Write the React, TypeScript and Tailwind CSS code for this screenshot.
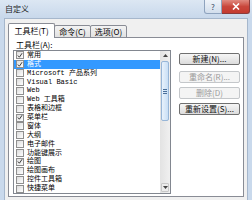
import React from 'react';

const items: { t: string; c?: boolean; s?: boolean }[] = [
  { t: '常用', c: true },
  { t: '格式', c: true, s: true },
  { t: 'Microsoft 产品系列' },
  { t: 'Visual Basic' },
  { t: 'Web' },
  { t: 'Web 工具箱' },
  { t: '表格和边框' },
  { t: '菜单栏', c: true },
  { t: '窗体' },
  { t: '大纲' },
  { t: '电子邮件' },
  { t: '功能键展示' },
  { t: '绘图', c: true },
  { t: '绘图画布' },
  { t: '控件工具箱' },
  { t: '快捷菜单' },
];

function Check({ on }: { on?: boolean }) {
  return (
    <div className="w-[8px] h-[8px] border border-[#8f8f8f] bg-gradient-to-br from-[#dcdcdc] to-[#ffffff] shrink-0 flex items-center justify-center">
      {on && (
        <svg width="7" height="7" viewBox="0 0 7 7">
          <path d="M1 3.5 L2.8 5.5 L6 0.8" fill="none" stroke="#333" strokeWidth="1.1" />
        </svg>
      )}
    </div>
  );
}

function Btn({ label, disabled }: { label: string; disabled?: boolean }) {
  return (
    <div
      className={
        'h-[12px] w-[61px] rounded-[2px] border flex items-center justify-center text-[8px] leading-none ' +
        (disabled
          ? 'border-[#c4c7ca] bg-[#f4f4f4] text-[#9a9a9a]'
          : 'border-[#707070] bg-gradient-to-b from-[#f6f6f6] to-[#dcdcdc] text-[#111]')
      }
    >
      {label}
    </div>
  );
}

export default function App() {
  return (
    <div className="w-[252px] h-[200px] bg-[#c9d9ec] overflow-hidden flex flex-col font-['Noto_Sans_CJK_SC',sans-serif] text-black">
      <div className="h-[18px] shrink-0 flex bg-gradient-to-b from-[#dce7f3] to-[#c8d8eb]">
        <div className="pl-[5px] pt-[4px] text-[8px] leading-[10px] text-[#1e1e1e]">自定义</div>
        <div className="ml-auto flex self-start mr-[2px]">
          <div className="w-[18px] h-[14px] border border-[#8ea3be] border-t-0 rounded-bl-[3px] bg-gradient-to-b from-[#eef3f9] to-[#d2deec] flex items-center justify-center text-[8px] leading-none text-[#33475f]">
            ?
          </div>
          <div className="w-[28px] h-[14px] border border-[#8a3b3b] border-t-0 border-l-0 rounded-br-[3px] bg-gradient-to-b from-[#e08a80] via-[#c9473c] to-[#c43a2f] flex items-center justify-center">
            <svg width="8" height="7" viewBox="0 0 8 7">
              <path d="M1 0.5 L7 6.5 M7 0.5 L1 6.5" stroke="#fff" strokeWidth="1.6" />
            </svg>
          </div>
        </div>
      </div>
      <div className="mx-[4px] flex-1 bg-[#f0f0f0] border border-[#a6b7cc] border-b-0 pt-[4px] px-[3px] flex flex-col">
        <div className="flex items-end h-[15px] relative z-10 -mb-px">
          <div className="w-[47px] h-[15px] bg-white border border-[#898c95] border-b-0 rounded-t-[2px] flex items-center justify-center text-[8px] leading-none">
            工具栏(T)
          </div>
          <div className="w-[37px] h-[13px] -ml-px bg-gradient-to-b from-[#f3f3f3] to-[#e2e2e2] border border-[#898c95] rounded-t-[2px] flex items-center justify-center text-[8px] leading-none">
            命令(C)
          </div>
          <div className="w-[37px] h-[13px] -ml-px bg-gradient-to-b from-[#f3f3f3] to-[#e2e2e2] border border-[#898c95] rounded-t-[2px] flex items-center justify-center text-[8px] leading-none">
            选项(O)
          </div>
        </div>
        <div className="h-[160px] bg-white border border-[#898c95] pl-[4px] pt-[2px] flex gap-[8px]">
          <div className="w-[158px] flex flex-col">
            <div className="h-[10px] pl-[3px] text-[8px] leading-[10px]">工具栏(A):</div>
            <div className="h-[144px] border border-[#828790] flex">
              <div className="flex-1 flex flex-col">
                {items.map((it) => (
                  <div
                    key={it.t}
                    className={
                      'h-[8.875px] flex items-center pl-[2px] gap-[3px] ' +
                      (it.s ? 'bg-[#3399ff] text-white' : '')
                    }
                  >
                    <Check on={it.c} />
                    <span className="text-[7px] leading-[9px] whitespace-nowrap font-['Liberation_Mono','Noto_Sans_CJK_SC',monospace]">
                      {it.t}
                    </span>
                  </div>
                ))}
              </div>
              <div className="w-[10px] bg-gradient-to-r from-[#e3e3e3] to-[#f0f0f0] flex flex-col">
                <div className="h-[9px] flex items-center justify-center">
                  <svg width="5" height="3" viewBox="0 0 5 3">
                    <path d="M0 3 L2.5 0 L5 3 Z" fill="#444" />
                  </svg>
                </div>
                <div className="mt-[1px] h-[60px] mx-[1px] rounded-[2px] border border-[#97b6d8] bg-gradient-to-r from-[#e8f2fc] to-[#c9dff5] flex items-center justify-center">
                  <div className="flex flex-col gap-[1px]">
                    <div className="w-[4px] h-px bg-[#4a6f9a]" />
                    <div className="w-[4px] h-px bg-[#4a6f9a]" />
                    <div className="w-[4px] h-px bg-[#4a6f9a]" />
                  </div>
                </div>
                <div className="flex-1" />
                <div className="h-[9px] mb-[1px] mx-[1px] rounded-[1px] border border-[#c8c8c8] bg-[#ececec] flex items-center justify-center">
                  <svg width="5" height="3" viewBox="0 0 5 3">
                    <path d="M0 0 L2.5 3 L5 0 Z" fill="#444" />
                  </svg>
                </div>
              </div>
            </div>
          </div>
          <div className="flex flex-col pt-[13px]">
            <Btn label="新建(N)..." />
            <div className="h-[6px]" />
            <Btn label="重命名(R)..." disabled />
            <div className="h-[4px]" />
            <Btn label="删除(D)" disabled />
            <div className="h-[4px]" />
            <Btn label="重新设置(S)..." />
          </div>
        </div>
      </div>
    </div>
  );
}
